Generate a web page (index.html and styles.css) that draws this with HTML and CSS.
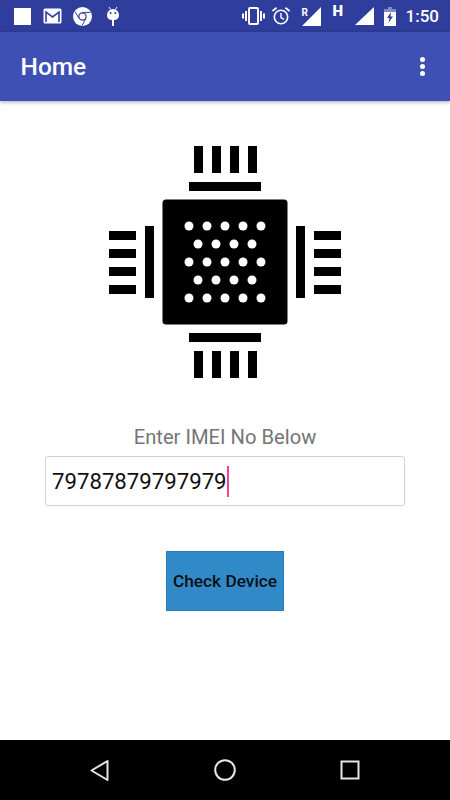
FILE: index.html
```html
<!DOCTYPE html>
<html lang="en">
<head>
    <meta charset="UTF-8">
    <meta name="viewport" content="width=device-width, initial-scale=1.0">
    <title>Home</title>
    <link rel="stylesheet" href="styles.css">
</head>
<body>

<div class="phone">
    <div class="status-bar">
        <div class="status-left">
            <span class="note-square"></span>
            <svg class="ic-gmail" viewBox="0 0 19 16"><rect x="0.5" y="0.5" width="18" height="15" rx="1.5" fill="#fff"/><path d="M3 14V4l6.5 5L16 4v10" fill="none" stroke="#303f9f" stroke-width="1.6"/></svg>
            <svg class="ic-chrome" viewBox="0 0 19 19"><circle cx="9.5" cy="9.5" r="9.5" fill="#fff"/><circle cx="9.5" cy="9.5" r="3.6" fill="#fff" stroke="#303f9f" stroke-width="1.2"/><path d="M9.5 5.4h8M6 11.5L2.2 4.8M12.9 11.6L9 18.4" fill="none" stroke="#303f9f" stroke-width="1"/></svg>
            <svg class="ic-android" viewBox="0 0 14 20"><path d="M3 1l1.5 2.5M11 1L9.500 3.500" stroke="#fff" stroke-width="1"/><path d="M1 9a6 6 0 0 1 12 0v1a5 5 0 0 1-5 4v6H6v-6a5 5 0 0 1-5-4z" fill="#fff"/><circle cx="4.700" cy="7" r="1" fill="#303f9f"/><circle cx="9.300" cy="7" r="1" fill="#303f9f"/></svg>
        </div>
        <div class="status-right">
            <svg class="ic-vibrate" viewBox="0 0 23 18"><rect x="7" y="1" width="9" height="16" rx="1" fill="none" stroke="#fff" stroke-width="2"/><path d="M4 4v10M19 4v10M1 6.500v5M22 6.500v5" stroke="#fff" stroke-width="2" fill="none"/></svg>
            <svg class="ic-alarm" viewBox="0 0 18 18"><circle cx="9" cy="10" r="6.700" fill="none" stroke="#fff" stroke-width="1.600"/><path d="M9 6v4.500l3 1.800" fill="none" stroke="#fff" stroke-width="1.400"/><path d="M0.500 4L4.500 0.800M17.500 4L13.500 0.800" stroke="#fff" stroke-width="1.800"/></svg>
            <div class="signal-r">
                <svg viewBox="0 0 19 19"><path d="M19 0V19H0z" fill="#fff"/></svg>
                <span class="signal-letter">R</span>
            </div>
            <span class="net-type">H</span>
            <svg class="ic-signal" viewBox="0 0 19 18"><path d="M19 0V18H0z" fill="#fff"/></svg>
            <svg class="ic-battery" viewBox="0 0 12 19"><path d="M4 0h4v2h4v17H0V2h4z" fill="#fff"/><path d="M0 0h12v5H0z" fill="#2f3d9d" fill-opacity="0.6"/><path d="M7 5L3 11h2.500L4.500 16 9 9.500H6.500z" fill="#303f9f"/></svg>
            <span class="clock">1:50</span>
        </div>
    </div>

    <header class="app-bar">
        <h1>Home</h1>
        <div class="overflow-menu"><i></i><i></i><i></i></div>
    </header>

    <main class="content">
        <svg class="chip" viewBox="0 0 232 232">
            <g class="chip-pins">
                <rect x="85" y="0" width="9" height="27"/><rect x="103" y="0" width="9" height="27"/><rect x="121" y="0" width="9" height="27"/><rect x="139" y="0" width="9" height="27"/>
                <rect x="80" y="36" width="72" height="9"/>
                <rect x="85" y="205" width="9" height="27"/><rect x="103" y="205" width="9" height="27"/><rect x="121" y="205" width="9" height="27"/><rect x="139" y="205" width="9" height="27"/>
                <rect x="80" y="187" width="72" height="9"/>
                <rect x="0" y="85" width="27" height="9"/><rect x="0" y="103" width="27" height="9"/><rect x="0" y="121" width="27" height="9"/><rect x="0" y="139" width="27" height="9"/>
                <rect x="36" y="80" width="9" height="72"/>
                <rect x="205" y="85" width="27" height="9"/><rect x="205" y="103" width="27" height="9"/><rect x="205" y="121" width="27" height="9"/><rect x="205" y="139" width="27" height="9"/>
                <rect x="187" y="80" width="9" height="72"/>
                <rect x="53.500" y="53.500" width="125" height="125" rx="3.500"/>
            </g>
            <g class="chip-dots">
                <circle cx="80" cy="80" r="4.500"/><circle cx="98" cy="80" r="4.500"/><circle cx="116" cy="80" r="4.500"/><circle cx="134" cy="80" r="4.500"/><circle cx="152" cy="80" r="4.500"/>
                <circle cx="89" cy="98" r="4.500"/><circle cx="107" cy="98" r="4.500"/><circle cx="125" cy="98" r="4.500"/><circle cx="143" cy="98" r="4.500"/>
                <circle cx="80" cy="116" r="4.500"/><circle cx="98" cy="116" r="4.500"/><circle cx="116" cy="116" r="4.500"/><circle cx="134" cy="116" r="4.500"/><circle cx="152" cy="116" r="4.500"/>
                <circle cx="89" cy="134" r="4.500"/><circle cx="107" cy="134" r="4.500"/><circle cx="125" cy="134" r="4.500"/><circle cx="143" cy="134" r="4.500"/>
                <circle cx="80" cy="152" r="4.500"/><circle cx="98" cy="152" r="4.500"/><circle cx="116" cy="152" r="4.500"/><circle cx="134" cy="152" r="4.500"/><circle cx="152" cy="152" r="4.500"/>
            </g>
        </svg>

        <p class="imei-label">Enter IMEI No Below</p>
        <div class="imei-input">
            <span>79787879797979</span><span class="caret"></span>
        </div>
        <button class="check-btn">Check Device</button>
    </main>

    <nav class="nav-bar">
        <svg viewBox="0 0 24 24"><path d="M19.500 3L3.500 12.500 19.500 22z" fill="none" stroke="#e6e6e6" stroke-width="2" stroke-linejoin="round"/></svg>
        <svg viewBox="0 0 24 24"><circle cx="12" cy="12" r="9.800" fill="none" stroke="#e6e6e6" stroke-width="2"/></svg>
        <svg viewBox="0 0 24 24"><rect x="3.500" y="3.500" width="17" height="17" fill="none" stroke="#e6e6e6" stroke-width="2"/></svg>
    </nav>
</div>

</body>
</html>
```

FILE: styles.css
```css
* {
    box-sizing: border-box;
}
body {
    margin: 0;
    font-family: Roboto, "Noto Sans", sans-serif;
    background-color: white;
}
.phone {
    width: 450px;
    height: 800px;
    display: flex;
    flex-direction: column;
    overflow: hidden;
}

/* status bar */
.status-bar {
    height: 32px;
    flex: none;
    background-color: #2f3d9d;
    display: flex;
    align-items: center;
    justify-content: space-between;
    padding: 0 11px 0 14px;
    color: white;
}
.status-left, .status-right {
    display: flex;
    align-items: center;
}
.status-bar svg {
    display: block;
}
.note-square {
    width: 17px;
    height: 17px;
    background: white;
    margin-right: 12px;
}
.ic-gmail {
    width: 19px;
    height: 16px;
    margin-right: 11px;
}
.ic-chrome {
    width: 19px;
    height: 19px;
    margin-right: 14px;
}
.ic-android {
    width: 14px;
    height: 20px;
}
.ic-vibrate {
    width: 23px;
    height: 18px;
    margin-right: 7px;
}
.ic-alarm {
    width: 18px;
    height: 18px;
    margin-right: 12px;
}
.signal-r {
    position: relative;
    width: 19px;
    height: 19px;
    margin-right: 12px;
}
.signal-letter {
    position: absolute;
    left: 0;
    top: 1px;
    font-size: 10px;
    font-weight: 700;
    line-height: 10px;
}
.net-type {
    width: 11px;
    font-size: 15px;
    font-weight: 900;
    line-height: 11px;
    margin-right: 11px;
    align-self: flex-start;
}
.ic-signal {
    width: 19px;
    height: 18px;
    margin-right: 10px;
}
.ic-battery {
    width: 12px;
    height: 19px;
    margin-right: 10px;
}
.clock {
    font-size: 17px;
    font-weight: 500;
}

/* app bar */
.app-bar {
    height: 69px;
    flex: none;
    background-color: #3e50b4;
    display: flex;
    align-items: center;
    justify-content: space-between;
    padding: 0 25px 0 20.500px;
    box-shadow: 0 1px 4px rgba(0, 0, 0, 0.35);
    color: white;
    position: relative;
}
.app-bar h1 {
    margin: 0;
    font-size: 24.500px;
    font-weight: 500;
}
.overflow-menu {
    display: flex;
    flex-direction: column;
    gap: 2px;
}
.overflow-menu i {
    display: block;
    width: 5px;
    height: 5px;
    border-radius: 50%;
    background: white;
}

/* content */
.content {
    flex: 1;
    display: flex;
    flex-direction: column;
    align-items: center;
    padding-top: 45px;
}
.chip {
    width: 232px;
    height: 232px;
    flex: none;
}
.chip-pins {
    fill: black;
}
.chip-dots {
    fill: white;
}
.imei-label {
    margin: 47px 0 0;
    font-size: 20.200px;
    line-height: 24px;
    color: #757575;
}
.imei-input {
    width: 360px;
    height: 50px;
    margin-top: 7px;
    padding: 0 6px;
    border: 1px solid #d2d2d2;
    border-radius: 3px;
    display: flex;
    align-items: center;
    font-size: 22.200px;
    color: #111;
}
.caret {
    width: 2px;
    height: 31px;
    background-color: #ff4081;
}
.check-btn {
    width: 118px;
    height: 60px;
    margin-top: 45px;
    padding: 0;
    border: 1px solid #2a7db8;
    background-color: #318ac7;
    color: #0a0f14;
    font-family: Roboto, sans-serif;
    font-size: 17.300px;
    font-weight: 500;
}

/* nav bar */
.nav-bar {
    height: 60px;
    flex: none;
    background-color: black;
    display: flex;
    align-items: center;
    justify-content: space-between;
    padding: 0 88px;
}
.nav-bar svg {
    width: 24px;
    height: 24px;
}
```
